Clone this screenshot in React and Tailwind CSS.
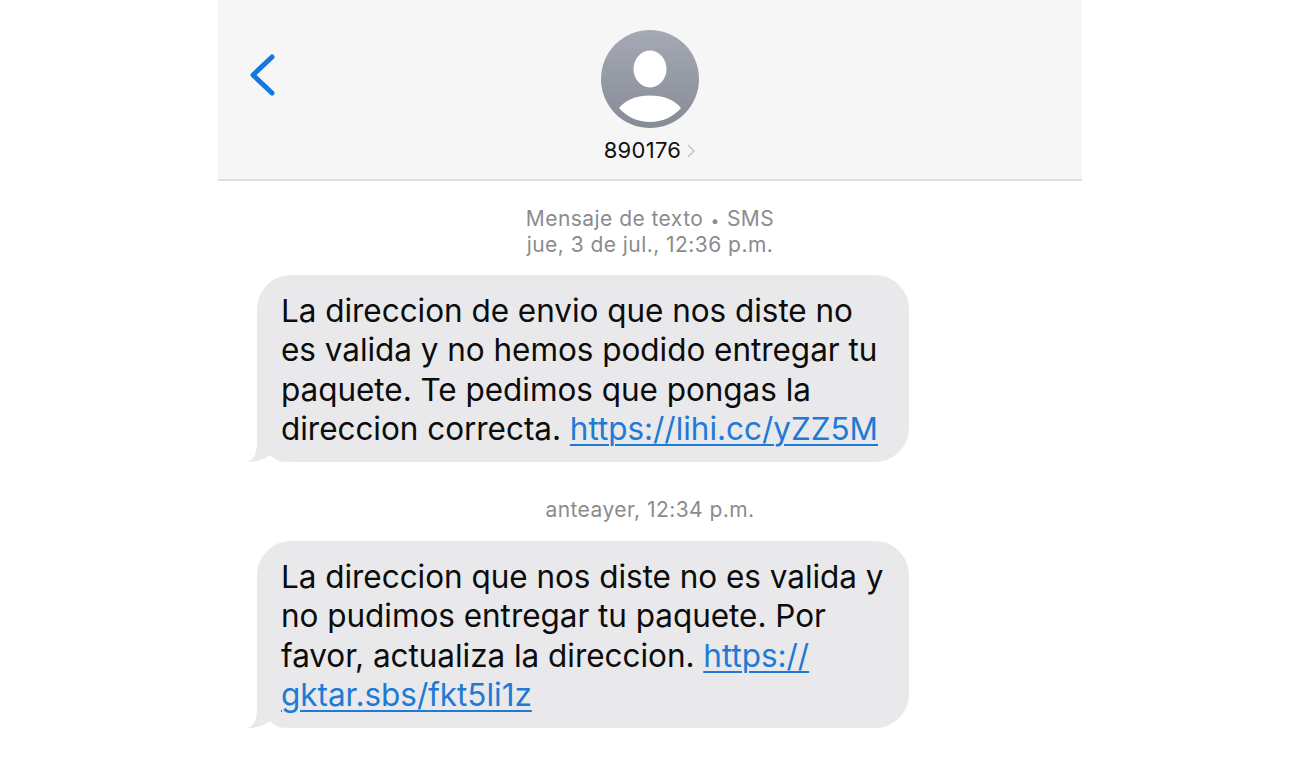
const font = { fontFamily: '"Inter", "Liberation Sans", sans-serif' };

const Link = ({ children }) => (
  <span className="text-[#1f7ad6] underline decoration-2 underline-offset-[4px]">{children}</span>
);

const Bubble = ({ lines }) => (
  <div className="relative ml-[39px] w-[652px] h-[187px] rounded-[34px] bg-[#e9e9eb] pl-[24px] pt-[16px] text-[31.5px] leading-[39.3px] tracking-[-0.04px] text-[#0c0c0c]">
    {/* tail */}
    <svg className="absolute left-[-12px] bottom-0" width="40" height="34" viewBox="0 0 40 34">
      <path d="M2 34 C8 33 12 27 12 14 L12 0 L40 0 L40 34 C34 34 29 31 25 27 C19 32 10 34.500 2 34 Z" fill="#e9e9eb" />
    </svg>
    <div className="relative">
      {lines.map((line, i) => (
        <div key={i} className="whitespace-nowrap">{line}</div>
      ))}
    </div>
  </div>
);

const App = () => {
  return (
    <div className="w-[1300px] h-[760px] overflow-hidden bg-white flex justify-center" style={font}>
      <div className="w-[864px] flex flex-col">
        {/* Header */}
        <div className="relative h-[181px] bg-[#f6f6f6] border-b-2 border-[#dedede] flex flex-col items-center pt-[30px]">
          <svg className="absolute left-[31px] top-[54px]" width="26" height="42" viewBox="0 0 26 42" fill="none">
            <path d="M23 3 L4 21 L23 39" stroke="#1478e0" strokeWidth="5" strokeLinecap="round" strokeLinejoin="round" />
          </svg>
          <svg width="98" height="98" viewBox="0 0 98 98">
            <defs>
              <linearGradient id="avatar" x1="0" y1="0" x2="0" y2="1">
                <stop offset="0" stopColor="#a5a9b4" />
                <stop offset="1" stopColor="#878b96" />
              </linearGradient>
            </defs>
            <circle cx="49" cy="49" r="49" fill="url(#avatar)" />
            <ellipse cx="49" cy="39" rx="16.5" ry="18.5" fill="#fff" />
            <path d="M18 78 C24 70 36 65.500 49 65.500 C62 65.500 74 70 80 78 C72 87 61 92 49 92 C37 92 26 87 18 78 Z" fill="#fff" />
          </svg>
          <div className="flex items-center mt-[9px] h-[27px]">
            <span className="text-[22px] leading-[27px] tracking-[0.3px] text-[#111]">890176</span>
            <svg className="ml-[5px]" width="10" height="16" viewBox="0 0 10 16" fill="none">
              <path d="M2 2 L8 8 L2 14" stroke="#c6c6c8" strokeWidth="1.600" />
            </svg>
          </div>
        </div>

        {/* Messages */}
        <div className="pt-[25px] text-center text-[21px] leading-[26px] tracking-[0.45px] text-[#8b8b8f]">
          <div className="h-[26px]">Mensaje de texto <span className="text-[15px] leading-none mx-[1px]">•</span> SMS</div>
          <div>jue, 3 de jul., 12:36 p.m.</div>
        </div>
        <div className="mt-[17px]">
          <Bubble
            lines={[
              "La direccion de envio que nos diste no",
              "es valida y no hemos podido entregar tu",
              "paquete. Te pedimos que pongas la",
              <>direccion correcta. <Link>https://lihi.cc/yZZ5M</Link></>,
            ]}
          />
        </div>
        <div className="mt-[35px] text-center text-[21px] leading-[26px] tracking-[0.45px] text-[#8b8b8f]">anteayer, 12:34 p.m.</div>
        <div className="mt-[18px]">
          <Bubble
            lines={[
              "La direccion que nos diste no es valida y",
              "no pudimos entregar tu paquete. Por",
              <>favor, actualiza la direccion. <Link>https://</Link></>,
              <Link>gktar.sbs/fkt5li1z</Link>,
            ]}
          />
        </div>
      </div>
    </div>
  );
};

export default App;
